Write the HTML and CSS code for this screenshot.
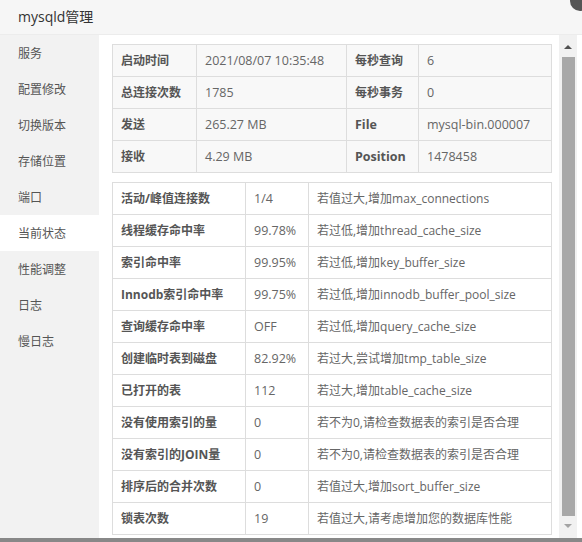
FILE: index.html
```html
<!DOCTYPE html>
<html>
<head>
<meta charset="utf-8">
<link rel="stylesheet" href="styles.css">
</head>
<body>
<div class="win">
  <div class="header">
    <span class="title">mysqld管理</span>
    <span class="close"></span>
  </div>
  <div class="main">
    <ul class="side">
      <li>服务</li>
      <li>配置修改</li>
      <li>切换版本</li>
      <li>存储位置</li>
      <li>端口</li>
      <li class="active">当前状态</li>
      <li>性能调整</li>
      <li>日志</li>
      <li>慢日志</li>
    </ul>
    <div class="content">
      <div class="tables">
        <table class="t1">
          <colgroup><col class="c1"><col class="c2"><col class="c3"><col class="c4"></colgroup>
          <tr><th>启动时间</th><td>2021/08/07 10:35:48</td><th>每秒查询</th><td>6</td></tr>
          <tr><th>总连接次数</th><td>1785</td><th>每秒事务</th><td>0</td></tr>
          <tr><th>发送</th><td>265.27 MB</td><th class="lat">File</th><td>mysql-bin.000007</td></tr>
          <tr><th>接收</th><td>4.29 MB</td><th class="lat">Position</th><td>1478458</td></tr>
        </table>
        <table class="t2">
          <colgroup><col class="d1"><col class="d2"><col class="d3"></colgroup>
          <tr><th>活动/峰值连接数</th><td>1/4</td><td class="tip">若值过大,增加max_connections</td></tr>
          <tr><th>线程缓存命中率</th><td>99.78%</td><td class="tip">若过低,增加thread_cache_size</td></tr>
          <tr><th>索引命中率</th><td>99.95%</td><td class="tip">若过低,增加key_buffer_size</td></tr>
          <tr><th>Innodb索引命中率</th><td>99.75%</td><td class="tip">若过低,增加innodb_buffer_pool_size</td></tr>
          <tr><th>查询缓存命中率</th><td>OFF</td><td class="tip">若过低,增加query_cache_size</td></tr>
          <tr><th>创建临时表到磁盘</th><td>82.92%</td><td class="tip">若过大,尝试增加tmp_table_size</td></tr>
          <tr><th>已打开的表</th><td>112</td><td class="tip">若过大,增加table_cache_size</td></tr>
          <tr><th>没有使用索引的量</th><td>0</td><td class="tip">若不为0,请检查数据表的索引是否合理</td></tr>
          <tr><th>没有索引的JOIN量</th><td>0</td><td class="tip">若不为0,请检查数据表的索引是否合理</td></tr>
          <tr><th>排序后的合并次数</th><td>0</td><td class="tip">若值过大,增加sort_buffer_size</td></tr>
          <tr><th>锁表次数</th><td>19</td><td class="tip">若值过大,请考虑增加您的数据库性能</td></tr>
        </table>
      </div>
      <div class="scroll">
        <span class="arrow up"></span>
        <span class="thumb"></span>
        <span class="arrow down"></span>
      </div>
    </div>
  </div>
  <div class="strip"></div>
</div>
</body>
</html>
```
FILE: styles.css
```css
* { box-sizing: border-box; }
html, body { margin: 0; padding: 0; background: #fff; }
body {
  font-family: "Open Sans", "Noto Sans CJK SC", sans-serif;
  color: #666;
  font-size: 13px;
  width: 582px;
  height: 542px;
  overflow: hidden;
}
.win { position: relative; width: 582px; height: 542px; overflow: hidden; }
.header {
  height: 35px;
  background: #f6f6f6;
  border-bottom: 1px solid #ececec;
  padding-left: 18px;
  display: flex;
  align-items: center;
  padding-bottom: 3px;
}
.title { font-size: 14px; color: #333; }
.close {
  position: absolute;
  right: -8px;
  top: -9px;
  width: 20px;
  height: 20px;
  border-radius: 50%;
  background: #555;
}
.main { display: flex; height: 503px; }
.side {
  list-style: none;
  margin: 0;
  padding: 0;
  width: 99px;
  background: #f2f2f2;
  flex: none;
}
.side li {
  height: 36px;
  line-height: 36px;
  padding-left: 18px;
  color: #555;
  font-family: "Noto Sans CJK SC", sans-serif;
  font-size: 12px;
}
.side li.active { background: #fff; }
.content { display: flex; flex: 1; }
.tables {
  width: 460px;
  padding: 9px 8px 0 13px;
  display: flex;
  flex-direction: column;
  gap: 9px;
}
table {
  border-collapse: collapse;
  table-layout: fixed;
  width: 439px;
}
th, td {
  border: 1px solid #ddd;
  height: 32px;
  padding: 0 0 1px 8px;
  text-align: left;
  white-space: nowrap;
  overflow: hidden;
  font-size: 12.5px;
  color: #666;
}
th {
  font-weight: bold;
  color: #555;
  font-size: 12px;
  font-family: "Open Sans", "Noto Sans CJK SC", sans-serif;
}
th.lat { font-size: 12.5px; }
td.tip { font-size: 12px; }
.t1 { background: #f8f8f8; }
.t1 .c1 { width: 84px; }
.t1 .c2 { width: 150px; }
.t1 .c3 { width: 72px; }
.t1 .c4 { width: 133px; }
.t2 { background: #fff; }
.t2 .d1 { width: 133px; }
.t2 .d2 { width: 63px; }
.t2 .d3 { width: 243px; }
.scroll {
  width: 18px;
  background: #f1f1f1;
  display: flex;
  flex-direction: column;
  align-items: center;
  padding: 6px 0 6px;
}
.arrow { width: 0; height: 0; border-left: 4px solid transparent; border-right: 4px solid transparent; }
.up { border-bottom: 4px solid #505050; margin: 4px 0 8px; }
.down { border-top: 4px solid #a3a3a3; margin: 8px 0 4px; }
.thumb { width: 13px; flex: 1; background: #a8a8a8; }
.strip { height: 4px; background: #888; }
```
